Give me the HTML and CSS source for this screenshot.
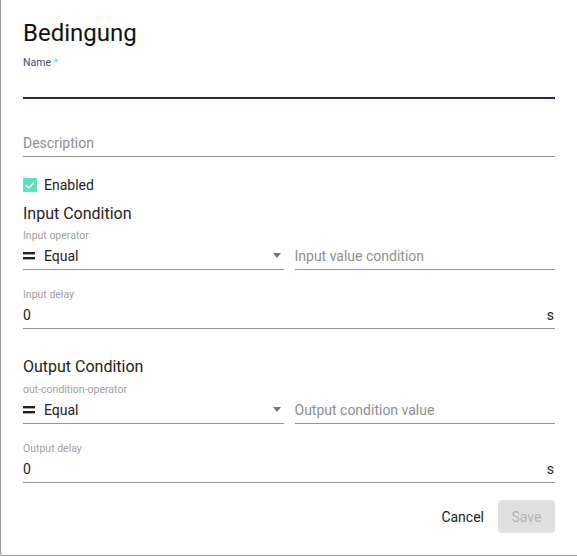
FILE: index.html
```html
<!DOCTYPE html>
<html>
<head>
<meta charset="utf-8">
<link rel="stylesheet" href="styles.css">
</head>
<body>
<div class="dialog">
  <h2 class="title">Bedingung</h2>

  <div class="field field-name">
    <div class="label label-focus">Name <span class="req">*</span></div>
    <div class="control control-focus"></div>
  </div>

  <div class="field field-desc">
    <div class="label"></div>
    <div class="control"><span class="placeholder">Description</span></div>
  </div>

  <div class="check-row">
    <span class="checkbox">
      <svg width="14" height="14" viewBox="0 0 14 14"><path d="M3 7.2 L5.8 10 L11 4.6" fill="none" stroke="#fff" stroke-width="1.4"/></svg>
    </span>
    <span class="check-text">Enabled</span>
  </div>

  <h3 class="section">Input Condition</h3>
  <div class="row">
    <div class="field half">
      <div class="label">Input operator</div>
      <div class="control">
        <svg class="eq" width="12" height="8" viewBox="0 0 12 8"><rect x="0" y="0" width="12" height="2.4" fill="#212121"/><rect x="0" y="5" width="12" height="2.4" fill="#212121"/></svg>
        <span class="value">Equal</span>
        <span class="arrow"></span>
      </div>
    </div>
    <div class="field half">
      <div class="label"></div>
      <div class="control"><span class="placeholder">Input value condition</span></div>
    </div>
  </div>
  <div class="field delay">
    <div class="label">Input delay</div>
    <div class="control"><span class="value num">0</span><span class="suffix">s</span></div>
  </div>

  <h3 class="section section-2">Output Condition</h3>
  <div class="row row-2">
    <div class="field half">
      <div class="label">out-condition-operator</div>
      <div class="control">
        <svg class="eq" width="12" height="8" viewBox="0 0 12 8"><rect x="0" y="0" width="12" height="2.4" fill="#212121"/><rect x="0" y="5" width="12" height="2.4" fill="#212121"/></svg>
        <span class="value">Equal</span>
        <span class="arrow"></span>
      </div>
    </div>
    <div class="field half">
      <div class="label"></div>
      <div class="control"><span class="placeholder">Output condition value</span></div>
    </div>
  </div>
  <div class="field delay delay-2">
    <div class="label">Output delay</div>
    <div class="control"><span class="value num">0</span><span class="suffix">s</span></div>
  </div>

  <div class="actions">
    <button class="btn btn-text">Cancel</button>
    <button class="btn btn-disabled">Save</button>
  </div>
</div>
</body>
</html>
```
FILE: styles.css
```css
* { box-sizing: border-box; }
html, body { margin: 0; padding: 0; background: #fff; }
body {
  font-family: Roboto, "Liberation Sans", Arial, sans-serif;
  color: #212121;
  width: 577px;
  height: 556px;
  overflow: hidden;
}
.dialog {
  width: 577px;
  height: 556px;
  background: #fff;
  border-left: 1px solid #9a9a9a;
  border-bottom: 1px solid #9a9a9a;
  border-bottom-left-radius: 3px;
  padding: 17px 22px 0 22px;
}
.title {
  margin: 0;
  font-size: 24px;
  font-weight: 400;
  line-height: 32px;
  color: #111;
}
.field { display: flex; flex-direction: column; }
.label {
  font-size: 10.5px;
  line-height: 14px;
  height: 14px;
  color: #a0a0a0;
  white-space: nowrap;
}
.label-focus { color: #3d4a7c; }
.req { color: #5fdcc0; }
.control {
  display: flex;
  align-items: center;
  height: 27px;
  border-bottom: 1px solid #959595;
  font-size: 14px;
}
.control-focus {
  height: 29px;
  border-bottom: 2px solid #1c2b5e;
}
.field-name { margin-top: 7px; }
.field-desc { margin-top: 17px; }
.placeholder { color: #8e8e8e; }
.value { color: #222; }
.num { flex: 1; }
.suffix { color: #222; padding-right: 1px; }
.check-row {
  display: flex;
  align-items: center;
  margin-top: 21px;
  height: 14px;
}
.checkbox {
  width: 14px;
  height: 14px;
  background: #5ce1c4;
  display: inline-flex;
  border-radius: 1px;
}
.check-text {
  margin-left: 7px;
  font-size: 14px;
  color: #222;
}
.section {
  margin: 0;
  font-size: 16px;
  font-weight: 400;
  line-height: 20px;
  margin-top: 12px;
  color: #222;
}
.section-2 { margin-top: 28px; }
.row {
  display: flex;
  gap: 11px;
  margin-top: 5px;
}
.row-2 { margin-top: 6px; }
.half { flex: 1; }
.eq { margin-right: 9px; flex: none; }
.row .value { flex: 1; }
.arrow {
  width: 0; height: 0;
  border-left: 4.5px solid transparent;
  border-right: 4.5px solid transparent;
  border-top: 5px solid #757575;
  margin-right: 3px;
  margin-top: -1px;
}
.delay { margin-top: 18px; }
.delay-2 { margin-top: 18px; }
.actions {
  display: flex;
  justify-content: flex-end;
  align-items: center;
  margin-top: 17px;
  gap: 14px;
}
.btn {
  font-family: Roboto, "Liberation Sans", Arial, sans-serif;
  font-size: 14px;
  border: none;
  background: transparent;
  height: 33px;
  padding: 0;
}
.btn-text { color: #222; }
.btn-disabled {
  width: 57px;
  background: #e0e0e0;
  color: #b2b2b2;
  border-radius: 4px;
}
```
